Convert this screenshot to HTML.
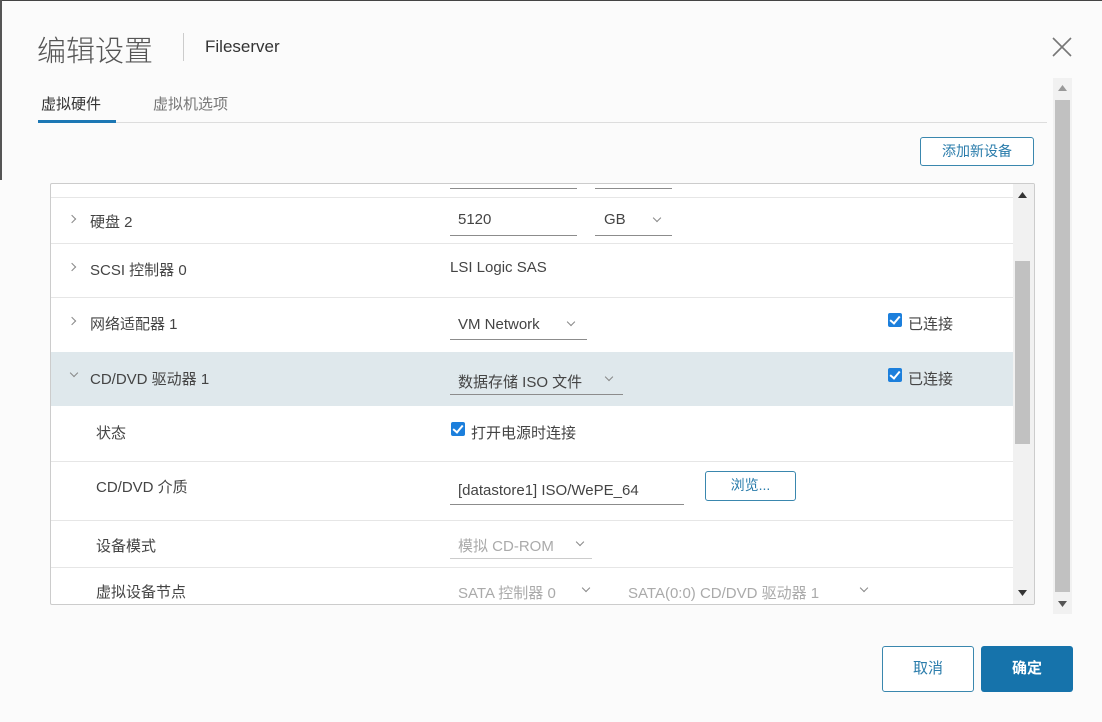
<!DOCTYPE html>
<html><head><meta charset="utf-8"><style>
*{box-sizing:border-box;margin:0;padding:0}
body{width:1102px;height:722px;background:#fbfbfb;font-family:"Liberation Sans","Noto Sans CJK SC",sans-serif;color:#444;position:relative;overflow:hidden}
.a{position:absolute;white-space:nowrap}
.line{position:absolute;background:#e6e6e6;height:1px}
.ul{position:absolute;height:1px;background:#8c8c8c}
.cb{position:absolute;width:14px;height:14px;background:#1c7fdc;border-radius:2px}
.cb:after{content:"";position:absolute;left:4px;top:1px;width:4px;height:8px;border:solid #fff;border-width:0 2px 2px 0;transform:rotate(40deg)}
.chev{position:absolute;width:6px;height:6px;border:solid #888;border-width:0 1px 1px 0}
.t{font-size:15px;color:#444}
</style></head><body>
<div class="a" style="left:0;top:0;width:1102px;height:1px;background:#444"></div>
<div class="a" style="left:0;top:0;width:2px;height:180px;background:#555"></div>
<div class="a" style="left:37px;top:28px;font-size:29px;color:#555;font-weight:300">编辑设置</div>
<div class="a" style="left:183px;top:33px;width:1px;height:28px;background:#ccc"></div>
<div class="a" style="left:205px;top:37px;font-size:17px;color:#333">Fileserver</div>
<svg class="a" style="left:1052px;top:37px" width="20" height="20"><path d="M1 1L19 19M19 1L1 19" stroke="#777" stroke-width="1.6"/></svg>
<div class="a" style="left:41px;top:93px;font-size:15px;color:#333">虚拟硬件</div>
<div class="a" style="left:153px;top:93px;font-size:15px;color:#777">虚拟机选项</div>
<div class="a" style="left:38px;top:122px;width:1009px;height:1px;background:#ddd"></div>
<div class="a" style="left:38px;top:120px;width:78px;height:3px;background:#1c77b4"></div>
<div class="a" style="left:1053px;top:78px;width:19px;height:536px;background:#f1f1f1"></div>
<div class="a" style="left:1055px;top:100px;width:15px;height:492px;background:#c1c1c1"></div>
<svg class="a" style="left:1058px;top:85px" width="9" height="6"><path d="M0 6L4.5 0L9 6Z" fill="#999"/></svg>
<svg class="a" style="left:1058px;top:601px" width="9" height="6"><path d="M0 0L4.5 6L9 0Z" fill="#555"/></svg>
<div class="a" style="left:920px;top:137px;width:114px;height:29px;border:1.5px solid #3a87ae;border-radius:3px;background:#fff;color:#2a7cab;font-size:14px;text-align:center;line-height:26px">添加新设备</div>
<div class="a" style="left:50px;top:183px;width:985px;height:422px;border:1px solid #ccc;background:#fff;border-radius:2px;overflow:hidden">
<div class="a" style="left:962px;top:0;width:21px;height:420px;background:#f1f1f1"></div>
<div class="a" style="left:964px;top:77px;width:15px;height:183px;background:#c1c1c1"></div>
<svg class="a" style="left:967px;top:8px" width="9" height="6"><path d="M0 6L4.5 0L9 6Z" fill="#333"/></svg>
<svg class="a" style="left:967px;top:406px" width="9" height="6"><path d="M0 0L4.5 6L9 0Z" fill="#333"/></svg>
<div class="ul" style="left:399px;top:4px;width:127px"></div><div class="ul" style="left:544px;top:4px;width:77px"></div>
<div class="line" style="left:0;top:13px;width:962px"></div>
<div class="chev" style="left:18px;top:32px;transform:rotate(-45deg)"></div>
<div class="a t" style="left:39px;top:27px">硬盘 2</div>
<div class="a t" style="left:407px;top:27px">5120</div><div class="ul" style="left:399px;top:51px;width:127px"></div>
<div class="a t" style="left:553px;top:27px">GB</div><div class="chev" style="left:603px;top:31px;transform:rotate(45deg)"></div><div class="ul" style="left:544px;top:51px;width:77px"></div>
<div class="line" style="left:0;top:59px;width:962px"></div>
<div class="chev" style="left:18px;top:80px;transform:rotate(-45deg)"></div>
<div class="a t" style="left:39px;top:75px">SCSI 控制器 0</div>
<div class="a t" style="left:399px;top:75px">LSI Logic SAS</div>
<div class="line" style="left:0;top:113px;width:962px"></div>
<div class="chev" style="left:18px;top:134px;transform:rotate(-45deg)"></div>
<div class="a t" style="left:39px;top:129px">网络适配器 1</div>
<div class="a t" style="left:407px;top:132px">VM Network</div><div class="chev" style="left:517px;top:135px;transform:rotate(45deg)"></div><div class="ul" style="left:399px;top:155px;width:137px"></div>
<div class="cb" style="left:837px;top:129px"></div><div class="a t" style="left:857px;top:129px">已连接</div>
<div class="a" style="left:0;top:168px;width:962px;height:54px;background:#dfe8ec"></div>
<div class="chev" style="left:20px;top:186px;transform:rotate(45deg)"></div>
<div class="a t" style="left:39px;top:184px">CD/DVD 驱动器 1</div>
<div class="a t" style="left:407px;top:187px">数据存储 ISO 文件</div><div class="chev" style="left:555px;top:190px;transform:rotate(45deg)"></div><div class="ul" style="left:399px;top:210px;width:173px"></div>
<div class="cb" style="left:837px;top:184px"></div><div class="a t" style="left:857px;top:184px">已连接</div>
<div class="a t" style="left:45px;top:238px">状态</div>
<div class="cb" style="left:400px;top:238px"></div><div class="a t" style="left:420px;top:238px">打开电源时连接</div>
<div class="line" style="left:0;top:277px;width:962px"></div>
<div class="a t" style="left:45px;top:292px">CD/DVD 介质</div>
<div class="a t" style="left:407px;top:298px;width:218px;overflow:hidden">[datastore1] ISO/WePE_64</div><div class="ul" style="left:399px;top:320px;width:234px"></div>
<div class="a" style="left:654px;top:287px;width:91px;height:30px;border:1.5px solid #3a87ae;border-radius:3px;color:#2a7cab;font-size:14px;text-align:center;line-height:26px">浏览...</div>
<div class="line" style="left:0;top:336px;width:962px"></div>
<div class="a t" style="left:45px;top:351px">设备模式</div>
<div class="a t" style="left:407px;top:351px;color:#aaa">模拟 CD-ROM</div><div class="chev" style="left:526px;top:355px;transform:rotate(45deg)"></div><div class="ul" style="left:399px;top:374px;width:142px;background:#ccc"></div>
<div class="line" style="left:0;top:383px;width:962px"></div>
<div class="a t" style="left:45px;top:397px">虚拟设备节点</div>
<div class="a t" style="left:407px;top:398px;color:#aaa">SATA 控制器 0</div><div class="chev" style="left:532px;top:401px;transform:rotate(45deg)"></div>
<div class="a t" style="left:577px;top:398px;color:#aaa">SATA(0:0) CD/DVD 驱动器 1</div><div class="chev" style="left:810px;top:401px;transform:rotate(45deg)"></div>
</div>
<div class="a" style="left:882px;top:646px;width:92px;height:46px;border:1.5px solid #3a87ae;border-radius:3px;background:#fff;color:#2a7cab;font-size:15px;text-align:center;line-height:43px">取消</div>
<div class="a" style="left:981px;top:646px;width:92px;height:46px;border-radius:3px;background:#1673ab;color:#fff;font-size:15px;font-weight:bold;text-align:center;line-height:46px">确定</div>
</body></html>
